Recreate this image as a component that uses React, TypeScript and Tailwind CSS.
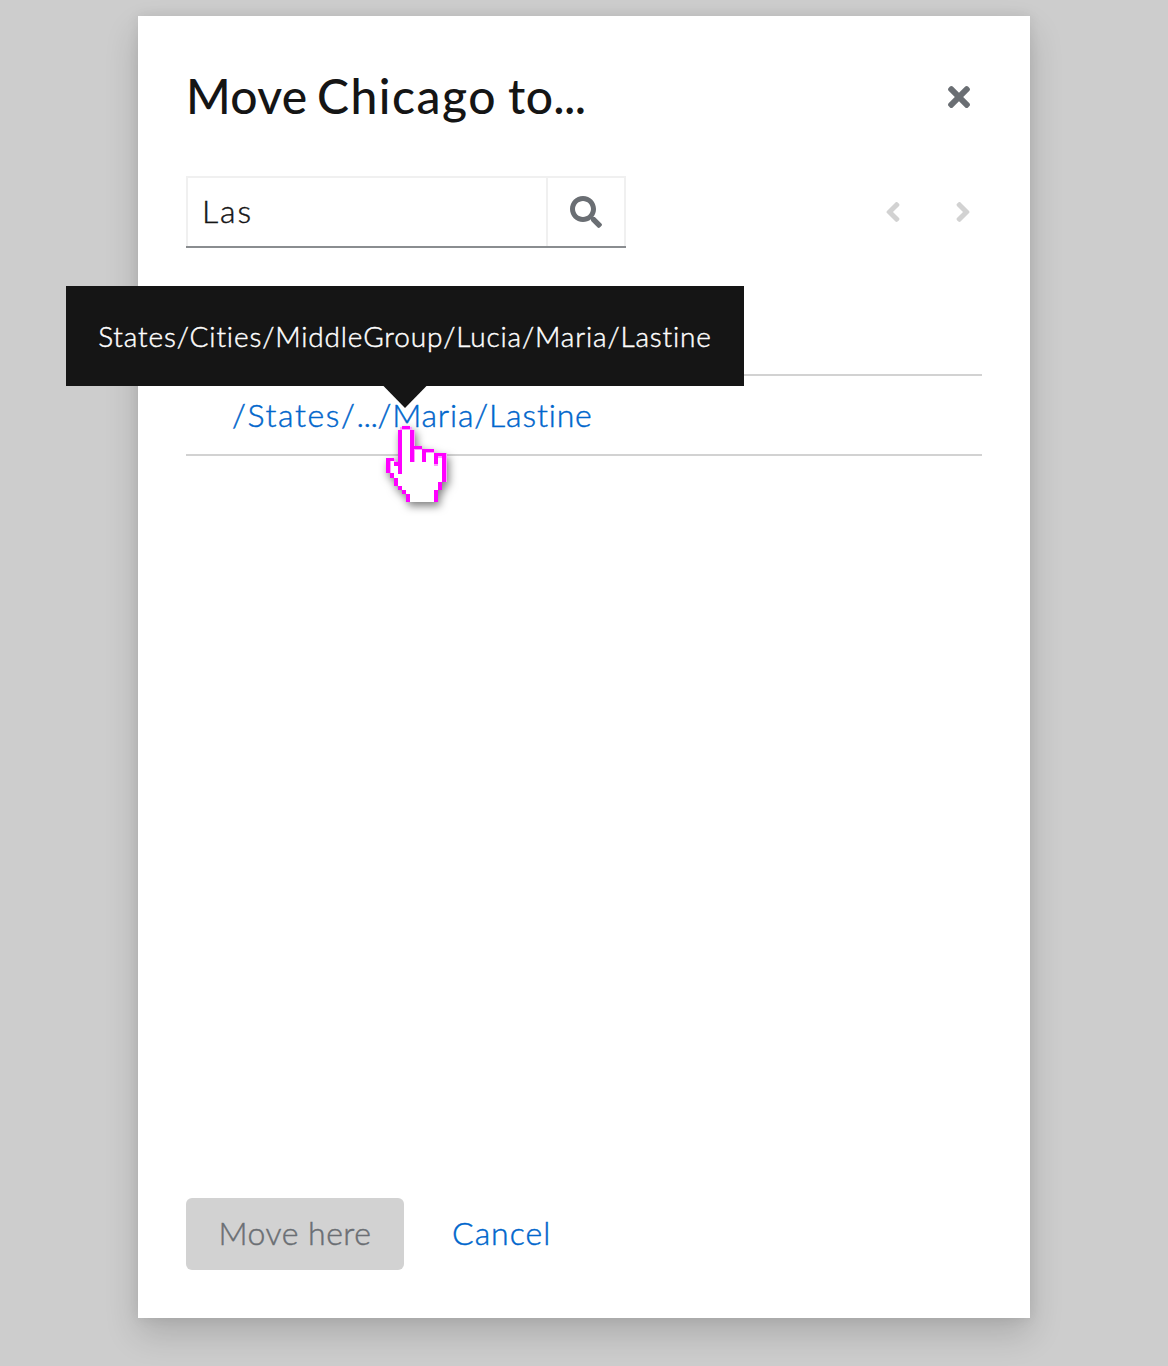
import React from "react";
import { FaAngleLeft, FaAngleRight, FaSearch, FaTimes } from "react-icons/fa";

const outline: [number, number, number, number][] = [
  [16, 0, 8, 2.5],
  [12, 4, 4, 44],
  [24, 4, 4, 32],
  [28, 20, 8, 3],
  [36, 23, 12, 3],
  [36, 23, 4, 13],
  [48, 27, 12, 3],
  [48, 27, 4, 11],
  [56, 27, 4, 29],
  [52, 56, 4, 8],
  [48, 64, 4, 12],
  [0, 32, 8, 3],
  [0, 32, 4, 15],
  [8, 36, 4, 4],
  [4, 47, 4, 5],
  [8, 52, 4, 8],
  [12, 60, 4, 4],
  [16, 64, 4, 4],
  [20, 68, 4, 8],
];

const soft: [number, number, number, number][] = [
  [14, 1, 2, 3],
  [24, 1, 2, 3],
  [16, 2, 8, 2],
  [28, 4, 1, 32],
  [28, 23, 8, 1],
  [40, 26, 8, 1],
  [52, 30, 4, 2],
  [48, 38, 4, 2],
  [60, 27, 1, 29],
  [4, 35, 1, 12],
  [8, 33, 2, 3],
];

function HandCursor() {
  return (
    <svg
      className="pointer-events-none absolute left-[386px] top-[426px] overflow-visible drop-shadow-[2px_4px_4px_rgba(0,0,0,0.5)]"
      width="62"
      height="76"
      viewBox="0 0 62 76"
      shapeRendering="crispEdges"
    >
      <path
        fill="#fff"
        d="M14 2H26V21H36V24H48V28H59V56H55V64H51V76H21V68H17V64H13V60H9V52H5V47H1V33H8V37H12V4H14Z"
      />
      {soft.map(([x, y, w, h], i) => (
        <rect key={i} x={x} y={y} width={w} height={h} fill="#ff99ff" />
      ))}
      {outline.map(([x, y, w, h], i) => (
        <rect key={i} x={x} y={y} width={w} height={h} fill="#ff00ff" />
      ))}
    </svg>
  );
}

export default function App() {
  return (
    <div className="relative h-[1366px] w-[1168px] overflow-hidden bg-[#cdcdcd] pt-4 font-['Lato',sans-serif] text-[32px] font-light leading-[48px] text-[#151515] [-webkit-text-stroke:0.45px] [font-variant-ligatures:none]">
      <div className="ml-[138px] flex h-[1302px] w-[892px] flex-col bg-white px-12 pb-12 shadow-[0_16px_32px_0_rgba(3,3,3,0.16),0_0_12px_0_rgba(3,3,3,0.08)]">
        <header className="flex h-[160px] items-center justify-between pr-3">
          <h1 className="whitespace-nowrap text-[48px] font-medium leading-[62px] tracking-[0.3px] [-webkit-text-stroke:0px]">
            Move<span className="tracking-[-2.6px]"> </span>
            <span className="tracking-[1.5px]">Chicago</span>
            <span className="tracking-[-1px]"> </span>to
            <span className="tracking-[-0.6px]">...</span>
          </h1>
          <button className="flex pt-0.5 text-[#6a6e73]" aria-label="Close">
            <FaTimes className="h-8 w-[22px]" />
          </button>
        </header>

        <div className="flex h-[72px] items-center justify-between">
          <div className="flex h-[72px] w-[440px] flex-col border-b-2 border-[#8a8d90]">
            <div className="flex flex-1 border-x-2 border-t-2 border-[#f0f0f0]">
              <div className="flex w-[360px] items-center border-r-2 border-[#f0f0f0] pb-[3px] pl-3.5 tracking-[1.9px]">
                Las
              </div>
              <button className="flex flex-1 items-center justify-center text-[#6a6e73]" aria-label="Search">
                <FaSearch size={32} />
              </button>
            </div>
          </div>
          <div className="flex gap-[54px] pr-[11px] text-[#d2d2d2]">
            <FaAngleLeft className="h-8 w-4" />
            <FaAngleRight className="h-8 w-4" />
          </div>
        </div>

        <ul className="mt-[126px] w-[796px] border-t-2 border-[#d2d2d2]">
          <li className="flex h-20 items-center border-b-2 border-[#d2d2d2] pl-[46px] tracking-[0.85px] text-[#06c]">
            <a className="whitespace-nowrap">
              <span className="tracking-[1.6px]">/States/</span>
              <span className="tracking-[-0.5px]">...</span>/Maria/Lastine
            </a>
          </li>
        </ul>

        <footer className="mt-auto flex items-center gap-12">
          <button className="h-[72px] w-[218px] whitespace-nowrap rounded-[6px] bg-[#d2d2d2] pb-[3px] tracking-[0.5px] text-[#6a6e73]">
            Move here
          </button>
          <button className="pb-[3px] tracking-[1px] text-[#06c]">Cancel</button>
        </footer>
      </div>

      <div className="absolute left-[66px] top-[286px] flex h-[100px] w-[678px] items-center justify-center whitespace-nowrap bg-[#151515] pb-px text-[28px] leading-[42px] tracking-[0.85px] text-white">
        States/Cities/MiddleGroup/Lucia/Maria/Lastine
        <svg className="absolute left-[317px] top-[99px]" width="44" height="23" viewBox="0 0 44 23">
          <path d="M0.5 0H43.5V1L22 23L0.5 1Z" fill="#151515" />
        </svg>
      </div>

      <HandCursor />
    </div>
  );
}
